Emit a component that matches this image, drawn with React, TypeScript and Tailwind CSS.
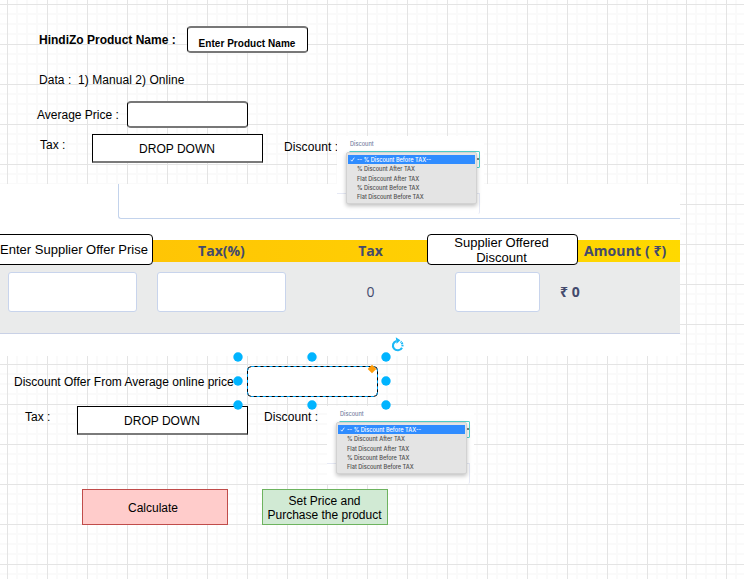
const minor = [10, 20, 30];

function CanvasGrid() {
  const xs: number[] = [-33];
  for (let x = 7; x < 660; x += 40) xs.push(x);
  xs.push(686, 726);
  const ys: number[] = [];
  for (let y = -36; y < 579; y += 40) ys.push(y);
  return (
    <svg className="absolute inset-0" width="744" height="579" shapeRendering="crispEdges">
      <g fill="#fafafa">
        {xs.map((x) => minor.map((m) => <rect key={`${x}-${m}`} x={x + m - 1} y="0" width="2" height="579" />))}
        {ys.map((y) => minor.map((m) => <rect key={`${y}-${m}`} x="0" y={y + m - 1} width="744" height="2" />))}
      </g>
      <g fill="#e4e4e4">
        {xs.map((x) => <rect key={x} x={x} y="0" width="1" height="579" />)}
        {ys.map((y) => <rect key={y} x="0" y={y} width="744" height="1" />)}
      </g>
    </svg>
  );
}

function DropDownBox() {
  return (
    <div className="flex h-[29px] w-[171px] shrink-0 items-center justify-center border border-b-2 border-black border-b-[#7a7a7a] bg-white pr-px pt-[2px]">
      DROP DOWN
    </div>
  );
}

const options = ["% Discount After TAX", "Flat Discount After TAX", "% Discount Before TAX", "Flat Discount Before TAX"];

function DiscountMenu() {
  return (
    <div className="relative z-10 h-[78px] w-[147px] shrink-0 bg-white pl-[9px] pt-[4px] font-['Inter',sans-serif] text-[5.6px] font-medium leading-[8px]">
      <div className="absolute left-[12px] top-[15px] h-[17px] w-[131px] rounded-[1px] border border-[#4fd3cd]" />
      <div className="absolute left-0 top-[57px] h-[21px] w-[143px] rounded-br-[2px] border-r border-t border-[#e6e9f5]" />
      <div className="pl-[4px] text-[#7580a0]">Discount</div>
      <div className="relative mt-[4px] h-[52px] w-[131px] rounded-[2px] border border-[#d2d2d2] bg-[#e4e4e4] px-px pt-[2px] text-[#4c4c4c] shadow-[0_2px_4px_rgba(0,0,0,0.25)]">
        <div className="mb-[0.5px] flex h-[9px] items-center gap-[2px] bg-[#2f8cff] pl-[2px] text-white">
          <svg width="5" height="5" viewBox="0 0 5 5" fill="none" stroke="white" strokeWidth="0.8">
            <path d="M.7 2.8 1.9 4.2 4.3.7" />
          </svg>
          <span className="whitespace-nowrap">-- % Discount Before TAX--</span>
        </div>
        {options.map((o) => (
          <div key={o} className="flex h-[9.4px] items-center whitespace-nowrap pl-[9px]">{o}</div>
        ))}
      </div>
      <div className="absolute left-[140px] top-[22px] h-[2px] w-[2px] bg-[#777]" />
    </div>
  );
}

function ProductForm() {
  return (
    <section className="flex h-[184px] flex-col pt-[26px]">
      <div className="flex h-[27px] pl-[39px]">
        <span className="w-[148px] pt-[7px] font-bold">HindiZo Product Name :</span>
        <div className="flex w-[121px] justify-center whitespace-nowrap rounded-[4px] border border-y-2 border-x-black border-y-[#777] bg-white pr-px pt-[10px] text-[10px] font-bold leading-[12px] tracking-[0.04px]">
          Enter Product Name
        </div>
      </div>
      <p className="mt-[20px] whitespace-pre pl-[39px] tracking-[0.05px]">{"Data :  1) Manual 2) Online"}</p>
      <div className="mt-[14px] flex h-[27px] pl-[37px]">
        <span className="w-[90px] pt-[7px]">Average Price :</span>
        <div className="w-[121px] rounded-[4px] border border-y-2 border-x-black border-y-[#777] bg-white" />
      </div>
      <div className="mt-[6px] flex h-[29px] items-start pl-[40px]">
        <span className="w-[52px] pt-[4px]">Tax :</span>
        <DropDownBox />
        <span className="ml-[21px] w-[53px] whitespace-nowrap pt-[6px] tracking-[0.08px]">Discount :</span>
        <div className="pt-[2px]">
          <DiscountMenu />
        </div>
      </div>
    </section>
  );
}

function OfferTable() {
  return (
    <section className="relative flex h-[172px] w-[680px] flex-col bg-white font-['Open_Sans','Noto_Sans',sans-serif] text-[14px] text-[#434a6d]">
      <div className="ml-[118px] h-[35px] rounded-bl-[3px] border-b border-l border-[#c3d3ec]" />
      <div className="relative z-10 mt-[21px] grid h-[22px] grid-cols-[153px_137px_137px_151px_102px] bg-linear-to-r from-[#ffbf06] to-[#ffd900] text-center font-bold leading-[22px]">
        <div className="-ml-[5px] -mt-[6px] flex h-[31px] items-center justify-end whitespace-nowrap rounded-[4px] border border-black bg-white pr-[4px] font-['Liberation_Sans',Arial,sans-serif] text-[13px] font-normal leading-[15px] text-black">
          Enter Supplier Offer Prise
        </div>
        <span>Tax(%)</span>
        <span className="pl-[24px]">Tax</span>
        <div className="-mt-[6px] flex h-[31px] items-center justify-center rounded-[4px] border border-black bg-white pr-[2px] font-['Liberation_Sans',Arial,sans-serif] text-[13px] font-normal leading-[15px] text-black">
          <span>Supplier Offered<br />Discount</span>
        </div>
        <span className="whitespace-nowrap pl-[6px] text-left tracking-[0.1px]">Amount ( ₹)</span>
      </div>
      <div className="grid h-[72px] grid-cols-[129px_20px_129px_169px_85px_1fr] border-b border-[#c9d1e6] bg-[#eaebeb] pl-[8px] pt-[10px] leading-[40px]">
        <div className="h-[40px] rounded-[3px] border border-[#c8d4ec] bg-white" />
        <span />
        <div className="h-[40px] rounded-[3px] border border-[#c8d4ec] bg-white" />
        <span className="text-center">0</span>
        <div className="h-[40px] rounded-[3px] border border-[#c8d4ec] bg-white" />
        <span className="pl-[20px] font-bold">₹ 0</span>
      </div>
    </section>
  );
}

const handles = [
  [-9, -9], [65, -9], [139, -9],
  [-9, 15], [139, 15],
  [-9, 39], [65, 39], [139, 39],
];

function SelectedField() {
  return (
    <svg className="relative z-20 shrink-0 overflow-visible" width="131" height="31">
      <rect x=".5" y=".5" width="130" height="30" rx="4" fill="white" stroke="black" />
      <rect x=".5" y=".5" width="130" height="30" rx="4" fill="none" stroke="#00a8ff" strokeDasharray="3 3" />
      {handles.map(([x, y]) => (
        <circle key={`${x}-${y}`} cx={x} cy={y} r="4.7" fill="#00b4ff" />
      ))}
      <path d="M125-1.3 129.3 3 125 7.3 120.7 3Z" fill="#ff9c08" />
      <g fill="none" stroke="#1cb9f7" strokeWidth="2.1">
        <path d="M149.4-25.1A4.8 4.8 0 1 0 155-18.3" />
        <path d="M155.4-19.6A4.8 4.8 0 0 0 153.6-24.3" strokeDasharray="1.6 .6" />
      </g>
      <path d="M148.8-28.8 153.4-25.7 149.6-22.2Z" fill="#1cb9f7" />
    </svg>
  );
}

function OfferForm() {
  return (
    <section className="flex flex-col pt-[10px]">
      <div className="flex h-[31px] pl-[14px]">
        <span className="w-[233px] shrink-0 whitespace-nowrap pt-[9px]">Discount Offer From Average online price</span>
        <SelectedField />
      </div>
      <div className="mt-[9px] flex h-[29px] items-start pl-[25px]">
        <span className="w-[52px] pt-[4px]">Tax :</span>
        <DropDownBox />
        <span className="ml-[16px] w-[63px] whitespace-nowrap pt-[4px] tracking-[0.08px]">Discount :</span>
        <DiscountMenu />
      </div>
      <div className="mt-[54px] flex h-[36px] gap-[34px] pl-[82px]">
        <button className="w-[146px] border border-[#c04c4a] bg-[#ffcccb] pr-[4px] pt-[2px]">Calculate</button>
        <button className="w-[126px] whitespace-nowrap border border-[#6db35f] bg-[#d1ead4] pr-px pt-px">
          Set Price and<br />Purchase the product
        </button>
      </div>
    </section>
  );
}

export default function App() {
  return (
    <main className="relative h-[579px] w-[744px] overflow-hidden bg-white font-['Liberation_Sans',Arial,sans-serif] text-[12px] leading-[14px] text-black">
      <CanvasGrid />
      <div className="relative flex flex-col">
        <ProductForm />
        <OfferTable />
        <OfferForm />
      </div>
    </main>
  );
}
